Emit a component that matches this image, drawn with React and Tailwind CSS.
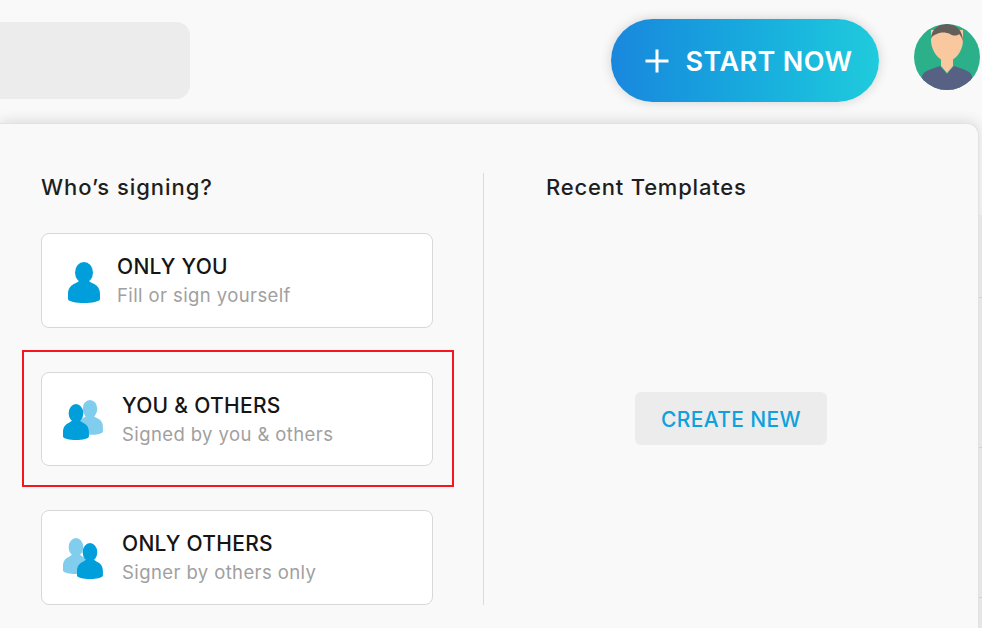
import React from "react";

const font = { fontFamily: '"Inter", "Open Sans", sans-serif' };

// head + rounded shoulders, drawn in a 32x41 box
const Person = ({ fill, x = 0, y = 0, sx = 1, sy = 1 }) => (
    <g transform={`translate(${x} ${y}) scale(${sx} ${sy})`} fill={fill}>
        <ellipse cx="16" cy="10.500" rx="9" ry="10.500" />
        <path d="M0 32c0-6 3-9 8-11 2-1 3-2 4-3h8c1 1 2 2 4 3 5 2 8 5 8 11v5c0 2.500-8 4-16 4S0 39.500 0 37z" />
    </g>
);

const SingleIcon = () => (
    <svg width="32" height="41" viewBox="0 0 32 41" className="mt-[4px] shrink-0">
        <Person fill="#009fdb" />
    </svg>
);

const YouOthersIcon = () => (
    <svg width="40" height="41" viewBox="0 0 40 41" className="mt-[3px] shrink-0">
        <Person fill="#80cdee" x={14} sx={0.81} sy={0.85} />
        <Person fill="#009fdb" y={4} sx={0.81} sy={0.88} />
    </svg>
);

const OnlyOthersIcon = () => (
    <svg width="40" height="41" viewBox="0 0 40 41" className="mt-[2px] shrink-0">
        <Person fill="#80cdee" sx={0.81} sy={0.88} />
        <Person fill="#009fdb" x={14} y={5} sx={0.81} sy={0.88} />
    </svg>
);

const Avatar = () => (
    <svg width="66" height="66" viewBox="0 0 66 66" className="shrink-0">
        <defs>
            <clipPath id="avatar-clip">
                <circle cx="33" cy="33" r="33" />
            </clipPath>
        </defs>
        <g clipPath="url(#avatar-clip)">
            <rect width="66" height="66" fill="#2bb08a" />
            <path d="M27 30h12v12l-6 7-6-7z" fill="#fac89e" />
            <path d="M17 6h32v10c0 10-7 21-16 21S17 26 17 16z" fill="#fac89e" />
            <path d="M6 66c0-8 1-15 5-18 3-2 9-4 15-6l7 8 7-8c6 2 12 4 15 6 4 3 5 10 5 18z" fill="#566183" />
            <path d="M17 15C17 6 24 0 33 0s16 6 16 18c-1-4-2-6-4-8-2 2-6 2-9 0-4-2-10-2-13 0-3 1-5 2-6 5z" fill="#645f5b" />
        </g>
    </svg>
);

const SignerCard = ({ Icon, title, subtitle, gap, pad }) => (
    <div className={`flex h-[94.500px] w-[392px] items-center rounded-[8px] border border-[#d8d8d8] bg-white ${pad} ${gap}`}>
        <Icon />
        <div className="mt-[2px] flex flex-col">
            <span className="text-[21px] leading-[28px] font-medium tracking-[0.3px] text-[#151515]">{title}</span>
            <span className="text-[18.500px] leading-[28px] font-normal tracking-[0.4px] text-[#a0a0a0]">{subtitle}</span>
        </div>
    </div>
);

export default function App() {
    return (
        <div className="flex h-[628px] w-[982px] flex-col overflow-hidden bg-[#f9f9f9]" style={font}>
            <header className="flex h-[123px] shrink-0 items-start">
                <div className="mt-[22px] h-[77px] w-[190px] rounded-r-[14px] bg-[#ececec]" />
                <button className="mt-[19px] ml-[421px] flex h-[83px] w-[268px] items-center justify-center gap-[16px] rounded-full bg-gradient-to-r from-[#1a87dd] to-[#20cbdc] pl-[6px] text-white shadow-[0_0_12px_rgba(0,0,0,0.16)]">
                    <svg width="26" height="26" viewBox="0 0 26 26" className="shrink-0">
                        <path d="M13 1.500v23M1.500 13h23" stroke="#fff" strokeWidth="3" fill="none" />
                    </svg>
                    <span className="mt-[3px] text-[27px] font-semibold tracking-[0.4px]">START NOW</span>
                </button>
                <div className="mt-[24px] ml-[35px]">
                    <Avatar />
                </div>
            </header>
            <div className="flex h-[505px] shrink-0">
                <main className="flex w-[979px] shrink-0 rounded-tr-[12px] border-t border-r border-[#e2e2e2] bg-[#f9f9f9] shadow-[0_-2px_14px_rgba(0,0,0,0.12)]">
                    <section className="mt-[49px] ml-[41px] h-[432px] w-[443px] shrink-0 border-r border-[#dcdcdc]">
                        <h2 className="text-[22px] leading-[28px] font-medium tracking-[0.95px] text-[#1e1e1e]">Who’s signing?</h2>
                        <div className="mt-[32px] flex flex-col gap-[44px]">
                            <SignerCard Icon={SingleIcon} title="ONLY YOU" subtitle="Fill or sign yourself" pad="pl-[26px]" gap="gap-[17px]" />
                            <div className="relative w-[392px]">
                                <div className="absolute -top-[22px] -right-[21px] -bottom-[21px] -left-[19px] border-2 border-[#f5161e]" />
                                <SignerCard Icon={YouOthersIcon} title="YOU & OTHERS" subtitle="Signed by you & others" pad="pl-[21px]" gap="gap-[19px]" />
                            </div>
                            <SignerCard Icon={OnlyOthersIcon} title="ONLY OTHERS" subtitle="Signer by others only" pad="pl-[21px]" gap="gap-[19px]" />
                        </div>
                    </section>
                    <section className="mt-[49px] ml-[62px] flex h-[432px] flex-1 flex-col">
                        <h2 className="text-[22px] leading-[28px] font-medium tracking-[0.8px] text-[#1e1e1e]">Recent Templates</h2>
                        <div className="mt-[191px] ml-[89px]">
                            <button className="h-[53px] w-[192px] rounded-[6px] bg-[#ececec] pt-[2px] text-[21px] font-medium tracking-[0.35px] text-[#0ea1dc]">CREATE NEW</button>
                        </div>
                    </section>
                </main>
                <aside className="mt-[92px] flex w-[3px] flex-col bg-[#e6e6e6]">
                    <div className="h-[82px]" />
                    <div className="h-[150px] border-t border-[#d2d2d2]" />
                    <div className="h-[150px] border-t border-[#d2d2d2]" />
                    <div className="flex-1 border-t border-[#d2d2d2]" />
                </aside>
            </div>
        </div>
    );
}
